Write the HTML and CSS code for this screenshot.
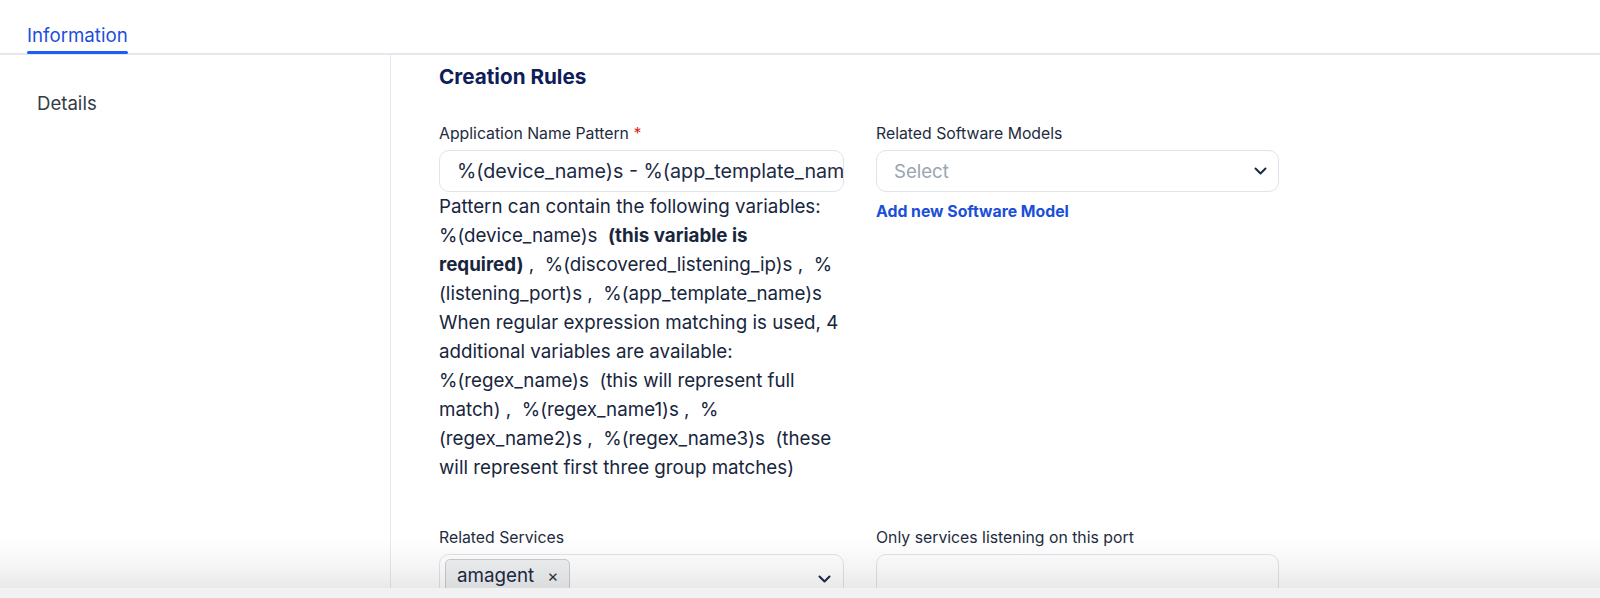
FILE: index.html
```html
<!DOCTYPE html>
<html>
<head>
<meta charset="utf-8">
<link rel="stylesheet" href="styles.css">
</head>
<body>
<div class="page">
  <div class="tabs">
    <div class="tab active">Information</div>
  </div>
  <div class="body">
    <aside class="sidebar">
      <div class="side-item">Details</div>
    </aside>
    <main class="main">
      <h2 class="section-title">Creation Rules</h2>
      <div class="grid">
        <div class="field">
          <label class="label">Application Name Pattern <span class="req">*</span></label>
          <div class="input"><span class="input-text">%(device_name)s - %(app_template_name)s</span></div>
          <div class="help">Pattern can contain the following variables:<br>%(device_name)s &nbsp;<b>(this variable is</b><br><b>required)</b> , &nbsp;%(discovered_listening_ip)s , &nbsp;%<br>(listening_port)s , &nbsp;%(app_template_name)s<br>When regular expression matching is used, 4<br>additional variables are available:<br>%(regex_name)s &nbsp;(this will represent full<br>match) , &nbsp;%(regex_name1)s , &nbsp;%<br>(regex_name2)s , &nbsp;%(regex_name3)s &nbsp;(these<br>will represent first three group matches)</div>
        </div>
        <div class="field">
          <label class="label">Related Software Models</label>
          <div class="input select"><span class="placeholder">Select</span>
            <svg class="chev" width="13" height="8" viewBox="0 0 13 8"><path d="M1.5 1.5l5 5 5-5" fill="none" stroke="#1c2a44" stroke-width="2" stroke-linecap="round" stroke-linejoin="round"/></svg>
          </div>
          <a class="link">Add new Software Model</a>
        </div>
        <div class="field second">
          <label class="label">Related Services</label>
          <div class="input select multi">
            <span class="chip">amagent <span class="x">×</span></span>
            <svg class="chev" width="13" height="8" viewBox="0 0 13 8"><path d="M1.5 1.5l5 5 5-5" fill="none" stroke="#1c2a44" stroke-width="2" stroke-linecap="round" stroke-linejoin="round"/></svg>
          </div>
        </div>
        <div class="field second">
          <label class="label">Only services listening on this port</label>
          <div class="input"></div>
        </div>
      </div>
    </main>
  </div>
  <div class="shade"></div>
  <div class="footer-band"></div>
</div>
</body>
</html>
```

FILE: styles.css
```css
* { box-sizing: border-box; }
html, body { margin: 0; padding: 0; background: #fff; }
body {
  font-family: Inter, "Noto Sans", "Liberation Sans", sans-serif;
  color: #1c2a44;
  width: 1600px;
  height: 598px;
  overflow: hidden;
}
.page { position: relative; height: 598px; overflow: hidden; }
.tabs {
  height: 55px;
  border-bottom: 2px solid #e6e7ec;
  display: flex;
  padding-left: 27px;
}
.tab {
  font-size: 18.7px;
  line-height: 24px;
  color: #1d4fdc;
  padding-top: 24px;
  height: 53px;
  position: relative;
}
.tab.active::after {
  content: "";
  position: absolute;
  left: 0; right: 0; bottom: -1px;
  height: 3px;
  background: #1f5ef5;
  border-radius: 2px;
}
.body { display: flex; height: 543px; }
.sidebar {
  width: 391px;
  flex: none;
  border-right: 1px solid #e6e9ee;
  padding-top: 36px;
  padding-left: 37px;
}
.side-item { font-size: 18.6px; line-height: 24px; color: #353b45; }
.main { padding-left: 48px; padding-top: 10px; }
.section-title {
  margin: 0;
  font-size: 20.7px;
  font-weight: 700;
  color: #0f1d5a;
  line-height: 24px;
}
.grid {
  display: grid;
  grid-template-columns: 405px 403px;
  column-gap: 32px;
  margin-top: 35px;
}
.field { display: flex; flex-direction: column; }
.field.second { margin-top: 46px; }
.label { font-size: 15.8px; color: #1e2b40; line-height: 20px; margin-bottom: 6px; }
.req { color: #e02424; }
.input {
  height: 42px;
  border: 1px solid #dfe4ea;
  border-radius: 10px;
  display: flex;
  align-items: center;
  padding: 0 17px;
  overflow: hidden;
  position: relative;
}
.input-text { font-size: 19.7px; white-space: nowrap; color: #1c2a44; }
.placeholder { font-size: 18.6px; color: #9aa3b2; }
.select { justify-content: space-between; padding-right: 11px; }
.chev { flex: none; }
.multi { padding-left: 5px; align-items: flex-start; padding-top: 4px; }
.chip {
  font-size: 18.8px;
  background: #f0f1f3;
  border: 1px solid #c9ccd2;
  border-radius: 5px;
  height: 33px;
  display: inline-flex;
  align-items: center;
  padding: 0 10px 0 11px;
  color: #1c2a44;
}
.multi .chev { margin-top: 16px; margin-right: 1px; }
.x { font-size: 17px; margin-left: 13px; color: #333; }
.help {
  font-size: 18.75px;
  line-height: 29px;
  color: #18263d;
  white-space: nowrap;
}
.help b { font-weight: 700; }
.link {
  font-size: 15.8px;
  line-height: 20px;
  font-weight: 700;
  color: #1b4fd8;
  margin-top: 10px;
}
.shade {
  position: absolute;
  left: 0; right: 0; bottom: 10px;
  height: 50px;
  background: linear-gradient(to bottom, rgba(0,0,0,0) 0%, rgba(0,0,0,0.035) 50%, rgba(0,0,0,0.085) 100%);
  pointer-events: none;
}
.footer-band {
  position: absolute;
  left: 0; right: 0; bottom: 0;
  height: 10px;
  background: #f1f1f1;
}
```
